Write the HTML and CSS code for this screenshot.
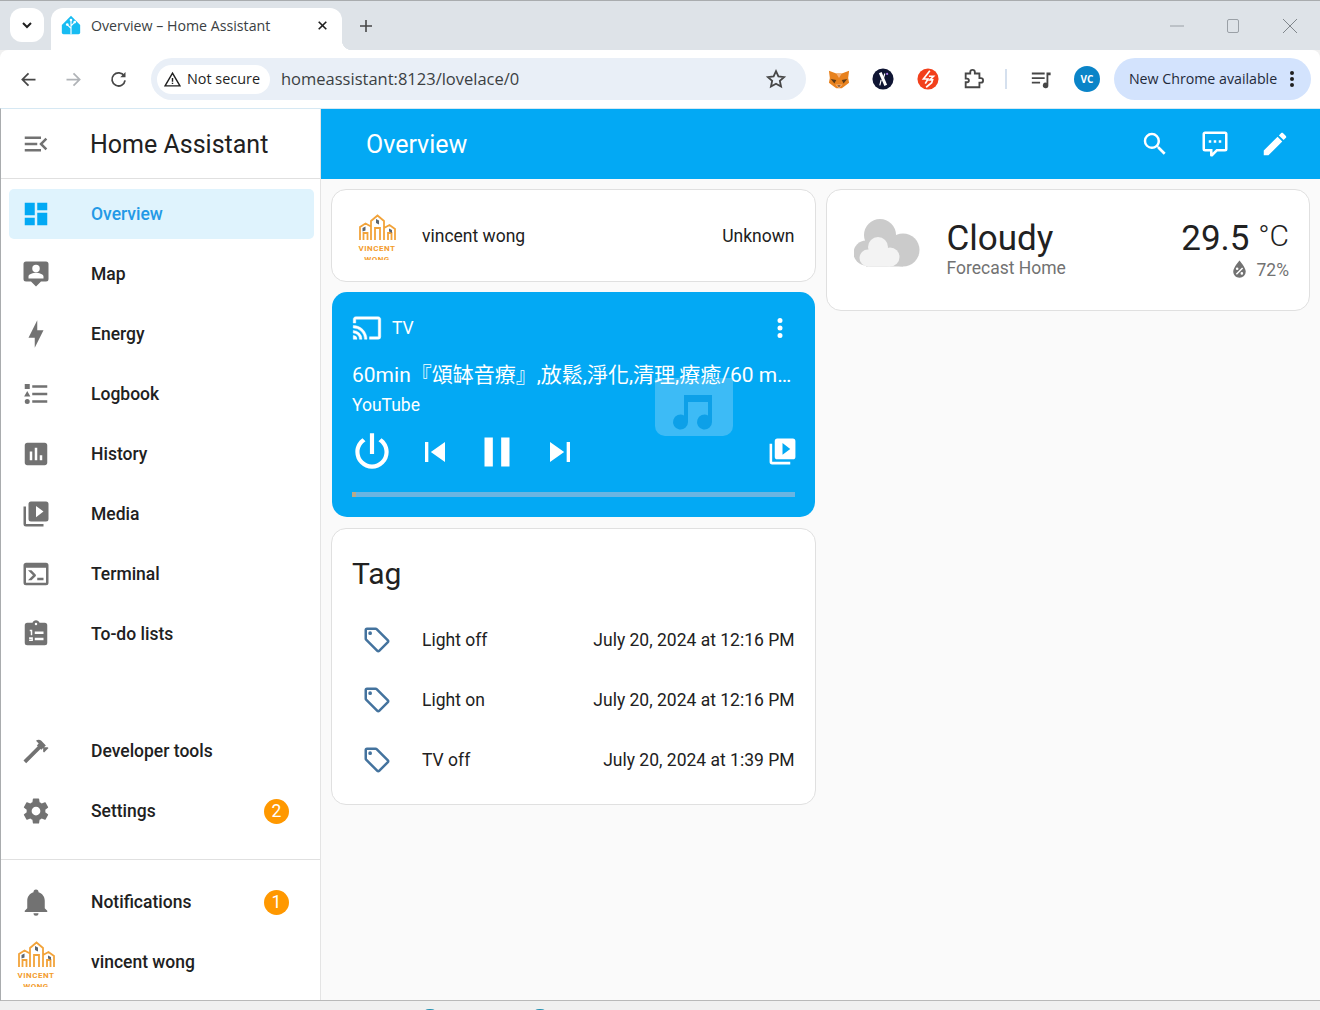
FILE: index.html
```html
<!DOCTYPE html>
<html lang="en">
  <head>
    <title>Overview – Home Assistant</title>
    <meta charset="UTF-8" />
    <meta name="viewport" content="width=device-width, initial-scale=1.0" />
    <link rel="stylesheet" href="styles.css">
  </head>
  <body>
    <div class="window">
      <!-- browser chrome -->
      <div class="tabstrip">
        <div class="tab-search">
          <svg class="ic18" viewBox="0 0 24 24"><path d="M6 9l6 6 6-6" fill="none" stroke="#1f1f1f" stroke-width="3"/></svg>
        </div>
        <div class="tab">
          <svg class="favicon" viewBox="0 0 24 24">
            <path d="M12 1L23 12V21a2 2 0 0 1-2 2H3a2 2 0 0 1-2-2V12Z" fill="#18bcf2"/>
            <path d="M12 23V6M12 16l-4.500-4.500M12 13l4.500-4.500" fill="none" stroke="#fff" stroke-width="1.400"/>
            <circle cx="12" cy="6" r="1.600" fill="#fff"/><circle cx="7.500" cy="11.500" r="1.600" fill="#fff"/><circle cx="16.500" cy="8.500" r="1.600" fill="#fff"/>
          </svg>
          <span class="tab-title">Overview – Home Assistant</span>
          <svg class="tab-close" viewBox="0 0 24 24"><path d="M5 5l14 14M19 5L5 19" fill="none" stroke="#1f1f1f" stroke-width="3"/></svg>
        </div>
        <svg class="new-tab" viewBox="0 0 24 24"><path d="M12 3v18M3 12h18" fill="none" stroke="#474747" stroke-width="2.400"/></svg>
        <div class="win-controls">
          <svg class="win-btn" viewBox="0 0 16 16"><path d="M2 8h14" stroke="#9aa0a6" stroke-width="1" fill="none"/></svg>
          <svg class="win-btn" viewBox="0 0 16 16"><rect x="2.500" y="1.500" width="11" height="13" rx="1.500" stroke="#9aa0a6" fill="none"/></svg>
          <svg class="win-btn" viewBox="0 0 16 16"><path d="M1 1l14 14M15 1L1 15" stroke="#80868b" stroke-width="1" fill="none"/></svg>
        </div>
      </div>

      <div class="toolbar">
        <svg class="nav-btn" viewBox="0 0 24 24"><path d="M20 12H5M12 5l-7 7 7 7" fill="none" stroke="#474747" stroke-width="2"/></svg>
        <svg class="nav-btn nav-gap" viewBox="0 0 24 24"><path d="M4 12h15M12 5l7 7-7 7" fill="none" stroke="#b0b3b7" stroke-width="2"/></svg>
        <svg class="nav-btn nav-gap" viewBox="0 0 24 24"><path d="M18.500 8A7.500 7.500 0 1 0 19.500 13" fill="none" stroke="#474747" stroke-width="2"/><path d="M20 3.500V9.500H14Z" fill="#474747"/></svg>
        <div class="omnibox">
          <div class="secure-pill">
            <svg class="warn" viewBox="0 0 24 24"><path d="M12 3L22.500 21H1.500Z" fill="none" stroke="#1f1f1f" stroke-width="2"/><path d="M12 10v5M12 16.500v2" stroke="#1f1f1f" stroke-width="2"/></svg>
            <span class="chrome-text">Not secure</span>
          </div>
          <span class="url chrome-text">homeassistant:8123/lovelace/0</span>
          <svg class="star" viewBox="0 0 24 24"><path d="M12 3.500l2.600 5.700 6.200.7-4.600 4.200 1.300 6.100L12 17.200l-5.500 3 1.300-6.100-4.600-4.200 6.200-.7Z" fill="none" stroke="#474747" stroke-width="2"/></svg>
        </div>
        <div class="extensions">
          <svg class="ext" viewBox="0 0 24 24">
            <path d="M1 3l8 3h6l8-3-1 8 1 5-5 4-3 2h-6l-3-2-5-4 1-5Z" fill="#e8821e"/>
            <path d="M3 12l6 1-2 4ZM21 12l-6 1 2 4Z" fill="#5c3a18"/>
            <path d="M9 6l3 5 3-5ZM8 18h8l-4 4Z" fill="#f6b27a"/>
            <path d="M10 19l2 1.500 2-1.500Z" fill="#2a1a0e"/>
          </svg>
          <svg class="ext" viewBox="0 0 24 24">
            <circle cx="12" cy="12" r="11.500" fill="#0f1533"/>
            <path d="M9 5l6 14" stroke="#fff" stroke-width="3.200" fill="none"/>
            <path d="M14 6l-1.500 5M10 13l-1.500 6" stroke="#fff" stroke-width="1.300" fill="none"/>
            <circle cx="16.500" cy="6.500" r="1.200" fill="#a77be8"/>
          </svg>
          <svg class="ext" viewBox="0 0 24 24">
            <circle cx="12" cy="12" r="11.500" fill="#f2401c"/>
            <path d="M14 3L7 12h5l-3 5M13 9h5l-4 4h3l-1 3-6 5" fill="none" stroke="#fff" stroke-width="1.800"/>
          </svg>
          <svg class="ext" viewBox="0 0 24 24"><path d="M4 6h5V4.500a2.500 2.500 0 0 1 5 0V6h5v5h1.500a2.500 2.500 0 0 1 0 5H19v5H4v-5.500h1.500a2 2 0 0 0 0-4H4Z" fill="none" stroke="#474747" stroke-width="2"/></svg>
          <div class="ext-sep"></div>
          <svg class="ext" viewBox="0 0 24 24"><path d="M2 5h14v2H2ZM2 10h14v2H2ZM2 15h9v2H2Z" fill="#474747"/><path d="M18 5h4.500v3H20v11a3 3 0 1 1-2-2.800Z" fill="#474747"/></svg>
          <div class="avatar-vc">VC</div>
        </div>
        <div class="update-pill">
          <span class="chrome-text">New Chrome available</span>
          <svg class="update-dots" viewBox="0 0 24 24"><path d="M12 16A2,2 0 0,1 14,18A2,2 0 0,1 12,20A2,2 0 0,1 10,18A2,2 0 0,1 12,16M12,10A2,2 0 0,1 14,12A2,2 0 0,1 12,14A2,2 0 0,1 10,12A2,2 0 0,1 12,10M12,4A2,2 0 0,1 14,6A2,2 0 0,1 12,8A2,2 0 0,1 10,6A2,2 0 0,1 12,4Z" fill="#1f1f1f"/></svg>
        </div>
      </div>

      <!-- home assistant -->
      <div class="app">
        <aside class="sidebar">
          <div class="side-head">
            <svg class="icon" viewBox="0 0 24 24"><path d="M21,15.61L19.59,17L14.58,12L19.59,7L21,8.39L17.44,12L21,15.61M3,6H16V8H3V6M3,13V11H13V13H3M3,18V16H16V18H3Z"/></svg>
            <span class="side-title">Home Assistant</span>
          </div>
          <nav class="side-nav">
            <div class="side-item selected">
              <svg class="icon" viewBox="0 0 24 24"><path d="M13,3V9H21V3M13,21H21V11H13M3,21H11V15H3M3,13H11V3H3V13Z"/></svg>
              <span>Overview</span>
            </div>
            <div class="side-item">
              <svg class="icon" viewBox="0 0 24 24"><path d="M20,2H4A2,2 0 0,0 2,4V16A2,2 0 0,0 4,18H8L12,22L16,18H20A2,2 0 0,0 22,16V4A2,2 0 0,0 20,2M12,4.500A3,3 0 0,1 15,7.500A3,3 0 0,1 12,10.500A3,3 0 0,1 9,7.500A3,3 0 0,1 12,4.500M18,15.500H6V14C6,12 10,11 12,11C14,11 18,12 18,14V15.500Z"/></svg>
              <span>Map</span>
            </div>
            <div class="side-item">
              <svg class="icon" viewBox="0 0 24 24"><path d="M11 15H6L13 1V9H18L11 23V15Z"/></svg>
              <span>Energy</span>
            </div>
            <div class="side-item">
              <svg class="icon" viewBox="0 0 24 24"><path d="M5,9.500L7.500,14H2.500L5,9.500M3,4H7V8H3V4M5,20A2,2 0 0,0 7,18A2,2 0 0,0 5,16A2,2 0 0,0 3,18A2,2 0 0,0 5,20M9,5V7H21V5H9M9,19H21V17H9V19M9,13H21V11H9V13Z"/></svg>
              <span>Logbook</span>
            </div>
            <div class="side-item">
              <svg class="icon" viewBox="0 0 24 24"><path d="M19 3H5C3.900 3 3 3.900 3 5V19C3 20.100 3.900 21 5 21H19C20.100 21 21 20.100 21 19V5C21 3.900 20.100 3 19 3M9 17H7V10H9V17M13 17H11V7H13V17M17 17H15V13H17V17Z"/></svg>
              <span>History</span>
            </div>
            <div class="side-item">
              <svg class="icon" viewBox="0 0 24 24"><path d="M4,6H2V20A2,2 0 0,0 4,22H18V20H4V6M20,2H8A2,2 0 0,0 6,4V16A2,2 0 0,0 8,18H20A2,2 0 0,0 22,16V4A2,2 0 0,0 20,2M12,14.500V5.500L18,10L12,14.500Z"/></svg>
              <span>Media</span>
            </div>
            <div class="side-item">
              <svg class="icon" viewBox="0 0 24 24"><path d="M20,19V7H4V19H20M20,3A2,2 0 0,1 22,5V19A2,2 0 0,1 20,21H4A2,2 0 0,1 2,19V5C2,3.890 2.900,3 4,3H20M13,17V15H18V17H13M9.580,13L5.570,9H8.400L11.700,12.300C12.090,12.690 12.090,13.330 11.700,13.720L8.420,17H5.590L9.580,13Z"/></svg>
              <span>Terminal</span>
            </div>
            <div class="side-item">
              <svg class="icon" viewBox="0 0 24 24"><path fill-rule="evenodd" d="M19,3H14.820C14.400,1.840 13.300,1 12,1C10.700,1 9.600,1.840 9.180,3H5A2,2 0 0,0 3,5V19A2,2 0 0,0 5,21H19A2,2 0 0,0 21,19V5A2,2 0 0,0 19,3M12,3A1,1 0 0,1 13,4A1,1 0 0,1 12,5A1,1 0 0,1 11,4A1,1 0 0,1 12,3M7,8.500H9V13H7.800V9.700H7ZM11,10H18V12H11ZM6.500,14.500H9.500V17.500H6.500V16.700H8.500V16.300H6.500ZM11,15H18V17H11Z"/></svg>
              <span>To-do lists</span>
            </div>
          </nav>
          <div class="side-spacer"></div>
          <div class="side-item">
            <svg class="icon" viewBox="0 0 24 24"><path d="M2 19.630L13.430 8.200L12.720 7.500L14.140 6.070L12 3.890C13.200 2.700 15.090 2.700 16.270 3.890L19.870 7.500L18.450 8.910H21.290L22 9.620L18.450 13.210L17.740 12.500V9.620L16.270 11.040L15.560 10.330L4.130 21.760L2 19.630Z"/></svg>
            <span>Developer tools</span>
          </div>
          <div class="side-item">
            <svg class="icon" viewBox="0 0 24 24"><path d="M12,15.500A3.500,3.500 0 0,1 8.500,12A3.500,3.500 0 0,1 12,8.500A3.500,3.500 0 0,1 15.500,12A3.500,3.500 0 0,1 12,15.500M19.430,12.970C19.470,12.650 19.500,12.330 19.500,12C19.500,11.670 19.470,11.340 19.430,11L21.540,9.370C21.730,9.220 21.780,8.950 21.660,8.730L19.660,5.270C19.540,5.050 19.270,4.960 19.050,5.050L16.560,6.050C16.040,5.660 15.500,5.320 14.870,5.070L14.500,2.420C14.460,2.180 14.250,2 14,2H10C9.750,2 9.540,2.180 9.500,2.420L9.130,5.070C8.500,5.320 7.960,5.660 7.440,6.050L4.950,5.050C4.730,4.960 4.460,5.050 4.340,5.270L2.340,8.730C2.210,8.950 2.270,9.220 2.460,9.370L4.570,11C4.530,11.340 4.500,11.670 4.500,12C4.500,12.330 4.530,12.650 4.570,12.970L2.460,14.630C2.270,14.780 2.210,15.050 2.340,15.270L4.340,18.730C4.460,18.950 4.730,19.030 4.950,18.950L7.440,17.940C7.960,18.340 8.500,18.680 9.130,18.930L9.500,21.580C9.540,21.820 9.750,22 10,22H14C14.250,22 14.460,21.820 14.500,21.580L14.870,18.930C15.500,18.670 16.040,18.340 16.560,17.940L19.050,18.950C19.270,19.030 19.540,18.950 19.660,18.730L21.660,15.270C21.780,15.050 21.730,14.780 21.540,14.630L19.430,12.970Z"/></svg>
            <span>Settings</span>
            <span class="badge">2</span>
          </div>
          <div class="side-divider"></div>
          <div class="side-item">
            <svg class="icon" viewBox="0 0 24 24"><path d="M21,19V20H3V19L5,17V11C5,7.900 7.030,5.170 10,4.290C10,4.190 10,4.100 10,4A2,2 0 0,1 12,2A2,2 0 0,1 14,4C14,4.100 14,4.190 14,4.290C16.970,5.170 19,7.900 19,11V17L21,19M14,21A2,2 0 0,1 12,23A2,2 0 0,1 10,21"/></svg>
            <span>Notifications</span>
            <span class="badge">1</span>
          </div>
          <div class="side-item side-user">
            <div class="logo">
              <svg class="logo-mark" viewBox="0 0 40 28">
                <path d="M3 26V13L8.500 9.500L14 12.500M6.500 26V19H10.500V26M14 26V7L20.500 1.500L27 7V26M18 26V14H23V26M27 14L32.500 11L38 15V26M31 26V19H34.500V26" fill="none" stroke="#f2a33a" stroke-width="1.800"/>
                <path d="M5.500 14l3-1.500v4l-3 1ZM19 5l3 1.500v4l-3-1.500ZM32 14.500l3 1.500v3l-3-1.500Z" fill="#5d6670"/>
              </svg>
              <span class="logo-line">VINCENT</span>
              <span class="logo-line">WONG</span>
            </div>
            <span>vincent wong</span>
          </div>
        </aside>

        <main class="main">
          <header class="main-head">
            <span class="main-title">Overview</span>
            <div class="head-actions">
              <svg class="icon-white" viewBox="0 0 24 24"><path d="M9.500,3A6.500,6.500 0 0,1 16,9.500C16,11.110 15.410,12.590 14.440,13.730L14.710,14H15.500L20.500,19L19,20.500L14,15.500V14.710L13.730,14.440C12.590,15.410 11.110,16 9.500,16A6.500,6.500 0 0,1 3,9.500A6.500,6.500 0 0,1 9.500,3M9.500,5C7,5 5,7 5,9.500C5,12 7,14 9.500,14C12,14 14,12 14,9.500C14,7 12,5 9.500,5Z"/></svg>
              <svg class="icon-white" viewBox="0 0 24 24"><path d="M9,22A1,1 0 0,1 8,21V18H4A2,2 0 0,1 2,16V4C2,2.890 2.900,2 4,2H20A2,2 0 0,1 22,4V16A2,2 0 0,1 20,18H13.900L10.200,21.710C10,21.900 9.750,22 9.500,22H9M10,16V19.080L13.080,16H20V4H4V16H10M17,11H15V9H17V11M13,11H11V9H13V11M9,11H7V9H9V11Z"/></svg>
              <svg class="icon-white" viewBox="0 0 24 24"><path d="M20.710,7.040C21.100,6.650 21.100,6 20.710,5.630L18.370,3.290C18,2.900 17.350,2.900 16.960,3.290L15.120,5.120L18.870,8.870M3,17.250V21H6.750L17.810,9.930L14.060,6.180L3,17.250Z"/></svg>
            </div>
          </header>

          <div class="cards">
            <div class="column">
              <div class="card person-card">
                <div class="logo">
                  <svg class="logo-mark" viewBox="0 0 40 28">
                    <path d="M3 26V13L8.500 9.500L14 12.500M6.500 26V19H10.500V26M14 26V7L20.500 1.500L27 7V26M18 26V14H23V26M27 14L32.500 11L38 15V26M31 26V19H34.500V26" fill="none" stroke="#f2a33a" stroke-width="1.800"/>
                    <path d="M5.500 14l3-1.500v4l-3 1ZM19 5l3 1.500v4l-3-1.500ZM32 14.500l3 1.500v3l-3-1.500Z" fill="#5d6670"/>
                  </svg>
                  <span class="logo-line">VINCENT</span>
                  <span class="logo-line">WONG</span>
                </div>
                <span class="row-name">vincent wong</span>
                <span class="row-value">Unknown</span>
              </div>

              <div class="media-card">
                <div class="media-art">
                  <svg class="media-note" viewBox="0 0 24 24"><path d="M7.500,4H21.500V17.500A3.750,3.750 0 1 1 19.500,14.200V7.500H9.500V17.500A3.750,3.750 0 1 1 7.500,14.200Z"/></svg>
                </div>
                <div class="media-top">
                  <svg class="icon-white icon-cast" viewBox="0 0 24 24"><path d="M1,10V12A9,9 0 0,1 10,21H12C12,14.920 7.070,10 1,10M1,14V16A5,5 0 0,1 6,21H8A7,7 0 0,0 1,14M1,18V21H4A3,3 0 0,0 1,18M21,3H3C1.890,3 1,3.890 1,5V8H3V5H21V19H14V21H21A2,2 0 0,0 23,19V5C23,3.890 22.100,3 21,3Z"/></svg>
                  <span class="media-device">TV</span>
                  <svg class="icon-white media-more" viewBox="0 0 24 24"><path d="M12,16A2,2 0 0,1 14,18A2,2 0 0,1 12,20A2,2 0 0,1 10,18A2,2 0 0,1 12,16M12,10A2,2 0 0,1 14,12A2,2 0 0,1 12,14A2,2 0 0,1 10,12A2,2 0 0,1 12,10M12,4A2,2 0 0,1 14,6A2,2 0 0,1 12,8A2,2 0 0,1 10,6A2,2 0 0,1 12,4Z"/></svg>
                </div>
                <div class="media-title">60min『頌缽音療』,放鬆,淨化,清理,療癒/60 minutes of singing bowl</div>
                <div class="media-app">YouTube</div>
                <div class="media-controls">
                  <svg class="ctrl-large ctrl-power" viewBox="0 0 24 24"><path d="M16.560,5.440L15.110,6.890C16.840,7.940 18,9.830 18,12A6,6 0 0,1 12,18A6,6 0 0,1 6,12C6,9.830 7.160,7.940 8.880,6.880L7.440,5.440C5.360,6.880 4,9.280 4,12A8,8 0 0,0 12,20A8,8 0 0,0 20,12C20,9.280 18.640,6.880 16.560,5.440M13,3H11V13H13"/></svg>
                  <svg class="ctrl-small" viewBox="0 0 24 24"><path d="M6,18V6H8V18H6M9.500,12L18,6V18L9.500,12Z"/></svg>
                  <svg class="ctrl-large" viewBox="0 0 24 24"><path d="M14,19H18V5H14M6,19H10V5H6V19Z"/></svg>
                  <svg class="ctrl-small" viewBox="0 0 24 24"><path d="M16,18H18V6H16M6,18L14.500,12L6,6V18Z"/></svg>
                  <svg class="ctrl-browse" viewBox="0 0 24 24"><path d="M4,6H2V20A2,2 0 0,0 4,22H18V20H4V6M20,2H8A2,2 0 0,0 6,4V16A2,2 0 0,0 8,18H20A2,2 0 0,0 22,16V4A2,2 0 0,0 20,2M12,14.500V5.500L18,10L12,14.500Z"/></svg>
                </div>
                <div class="media-progress"><div class="media-progress-done"></div></div>
              </div>

              <div class="card tag-card">
                <div class="tag-title">Tag</div>
                <div class="tag-row">
                  <svg class="tag-icon" viewBox="0 0 24 24"><path d="M21.410 11.580L12.410 2.580A2 2 0 0 0 11 2H4A2 2 0 0 0 2 4V11A2 2 0 0 0 2.590 12.420L11.590 21.420A2 2 0 0 0 13 22A2 2 0 0 0 14.410 21.410L21.410 14.410A2 2 0 0 0 22 13A2 2 0 0 0 21.410 11.580M13 20L4 11V4H11L20 13M6.500 5A1.500 1.500 0 1 1 5 6.500A1.500 1.500 0 0 1 6.500 5Z"/></svg>
                  <span class="row-name">Light off</span>
                  <span class="row-value">July 20, 2024 at 12:16 PM</span>
                </div>
                <div class="tag-row">
                  <svg class="tag-icon" viewBox="0 0 24 24"><path d="M21.410 11.580L12.410 2.580A2 2 0 0 0 11 2H4A2 2 0 0 0 2 4V11A2 2 0 0 0 2.590 12.420L11.590 21.420A2 2 0 0 0 13 22A2 2 0 0 0 14.410 21.410L21.410 14.410A2 2 0 0 0 22 13A2 2 0 0 0 21.410 11.580M13 20L4 11V4H11L20 13M6.500 5A1.500 1.500 0 1 1 5 6.500A1.500 1.500 0 0 1 6.500 5Z"/></svg>
                  <span class="row-name">Light on</span>
                  <span class="row-value">July 20, 2024 at 12:16 PM</span>
                </div>
                <div class="tag-row">
                  <svg class="tag-icon" viewBox="0 0 24 24"><path d="M21.410 11.580L12.410 2.580A2 2 0 0 0 11 2H4A2 2 0 0 0 2 4V11A2 2 0 0 0 2.590 12.420L11.590 21.420A2 2 0 0 0 13 22A2 2 0 0 0 14.410 21.410L21.410 14.410A2 2 0 0 0 22 13A2 2 0 0 0 21.410 11.580M13 20L4 11V4H11L20 13M6.500 5A1.500 1.500 0 1 1 5 6.500A1.500 1.500 0 0 1 6.500 5Z"/></svg>
                  <span class="row-name">TV off</span>
                  <span class="row-value">July 20, 2024 at 1:39 PM</span>
                </div>
              </div>
            </div>

            <div class="column">
              <div class="card weather-card">
                <svg class="weather-icon" viewBox="0 0 66 48">
                  <g fill="#cbcbcb"><circle cx="26" cy="16" r="16"/><circle cx="49" cy="31" r="16.500"/><circle cx="12" cy="34" r="12.500"/><rect x="12" y="28" width="37" height="19.500"/></g>
                  <g fill="#f3f3f3"><circle cx="24" cy="28" r="10"/><circle cx="14" cy="39" r="8.500"/><circle cx="36" cy="38" r="9.500"/><rect x="14" y="36" width="22" height="11.500"/></g>
                </svg>
                <div class="weather-text">
                  <div class="weather-state">Cloudy</div>
                  <div class="weather-name">Forecast Home</div>
                </div>
                <div class="weather-info">
                  <div class="weather-temp">29.5 <span class="weather-unit">°C</span></div>
                  <div class="weather-humidity">
                    <svg class="humidity-icon" viewBox="0 0 24 24"><path d="M12,3.250C12,3.250 6,10 6,14C6,17.320 8.690,20 12,20A6,6 0 0,0 18,14C18,10 12,3.250 12,3.250M14.470,9.970L15.530,11.030L9.530,17.030L8.470,15.970M9.750,10A1.250,1.250 0 0,1 11,11.250A1.250,1.250 0 0,1 9.750,12.500A1.250,1.250 0 0,1 8.500,11.250A1.250,1.250 0 0,1 9.750,10M14.250,14.500A1.250,1.250 0 0,1 15.500,15.750A1.250,1.250 0 0,1 14.250,17A1.250,1.250 0 0,1 13,15.750A1.250,1.250 0 0,1 14.250,14.500Z"/></svg>
                    <span>72%</span>
                  </div>
                </div>
              </div>
            </div>
          </div>
        </main>
      </div>

      <div class="taskbar">
        <span class="taskbar-dot dot-one"></span>
        <span class="taskbar-dot dot-two"></span>
      </div>
    </div>
  </body>
</html>
```

FILE: styles.css
```css
html,
body {
  margin: 0;
  width: 1320px;
  height: 1010px;
  overflow: hidden;
  font-family: Roboto, "Noto Sans CJK TC", sans-serif;
  color: #212121;
}

.window {
  width: 1320px;
  height: 1010px;
  display: flex;
  flex-direction: column;
  overflow: hidden;
  background-color: #f0f0f0;
}

/* browser chrome */
.tabstrip {
  height: 49px;
  flex: none;
  display: flex;
  align-items: flex-start;
  border-top: 1px solid #a9acae;
  background-color: #dee3e8;
  font-family: "Open Sans", sans-serif;
}

.tab-search {
  width: 34px;
  height: 34px;
  margin: 7px 0 0 10px;
  display: flex;
  align-items: center;
  justify-content: center;
  border-radius: 12px;
  background-color: #fff;
}

.ic18 {
  width: 16px;
  height: 16px;
}

.tab {
  position: relative;
  width: 291px;
  height: 42px;
  margin: 7px 0 0 7px;
  box-sizing: border-box;
  padding: 0 13px 8px 10px;
  display: flex;
  align-items: center;
  border-radius: 12px 12px 0 0;
  background-color: #fff;
}

.tab::after {
  content: "";
  position: absolute;
  right: -10px;
  bottom: 0;
  width: 10px;
  height: 10px;
  background: radial-gradient(circle at 100% 0, transparent 10px, #fff 10.500px);
}

.favicon {
  width: 20px;
  height: 20px;
  flex: none;
}

.tab-title {
  margin-left: 10px;
  font-size: 14.200px;
  white-space: nowrap;
  color: #3b3f43;
}

.tab-close {
  width: 13px;
  height: 13px;
  margin-left: auto;
}

.new-tab {
  width: 16px;
  height: 16px;
  margin: 17px 0 0 16px;
}

.win-controls {
  margin-left: auto;
  margin-top: 17px;
  padding-right: 22px;
  display: flex;
  gap: 41px;
}

.win-btn {
  width: 16px;
  height: 16px;
}

.toolbar {
  height: 58px;
  flex: none;
  display: flex;
  align-items: center;
  padding-left: 18px;
  border-radius: 8px 8px 0 0;
  background-color: #fff;
  font-family: "Open Sans", sans-serif;
}

.chrome-text {
  padding-bottom: 2px;
}

.nav-btn {
  width: 21px;
  height: 21px;
  flex: none;
}

.nav-gap {
  margin-left: 24px;
}

.omnibox {
  width: 655px;
  height: 42px;
  flex: none;
  margin-left: 22px;
  box-sizing: border-box;
  padding: 0 19px 0 6px;
  display: flex;
  align-items: center;
  border-radius: 21px;
  background-color: #e9eff7;
}

.secure-pill {
  height: 29px;
  width: 113px;
  box-sizing: border-box;
  padding-left: 7px;
  display: flex;
  align-items: center;
  gap: 6px;
  border-radius: 15px;
  background-color: #fff;
  font-size: 14.400px;
  color: #1f1f1f;
}

.warn {
  width: 17px;
  height: 17px;
}

.url {
  margin-left: 11px;
  font-size: 16.500px;
  color: #3b3f43;
}

.star {
  width: 22px;
  height: 22px;
  margin-left: auto;
}

.extensions {
  display: flex;
  align-items: center;
  margin-left: 21.500px;
}

.ext {
  width: 22px;
  height: 22px;
  margin-right: 22.700px;
  flex: none;
}

.ext-sep {
  width: 2px;
  height: 20px;
  margin: 0 23px 0 -1px;
  background-color: #d5e0ee;
}

.avatar-vc {
  width: 26px;
  height: 26px;
  margin-left: -1px;
  display: flex;
  align-items: center;
  justify-content: center;
  border-radius: 50%;
  background-color: #0a84c8;
  color: #fff;
  font-size: 10px;
  font-weight: 700;
}

.update-pill {
  width: 197px;
  height: 42px;
  margin-left: 14px;
  box-sizing: border-box;
  padding: 0 7px 0 15px;
  display: flex;
  align-items: center;
  justify-content: space-between;
  border-radius: 21px;
  background-color: #d3e3fd;
  font-size: 14.200px;
  white-space: nowrap;
  color: #1f2a3a;
}

.update-dots {
  width: 24px;
  height: 24px;
}

/* app */
.app {
  height: 893px;
  flex: none;
  display: flex;
  border-left: 1px solid #a9acae;
  border-top: 1px solid #d6e8f3;
  border-bottom: 1px solid #b9b9b9;
  box-sizing: border-box;
  background-color: #fff;
}

.sidebar {
  width: 320px;
  flex: none;
  display: flex;
  flex-direction: column;
  box-sizing: border-box;
  border-right: 1px solid #e4e4e4;
  padding-bottom: 13px;
}

.icon {
  width: 30px;
  height: 30px;
  flex: none;
  fill: #727272;
}

.side-head {
  height: 70px;
  flex: none;
  box-sizing: border-box;
  padding: 1px 0 0 20px;
  display: flex;
  align-items: center;
  border-bottom: 1px solid #e0e0e0;
}

.side-title {
  margin-left: 39px;
  font-size: 25px;
  white-space: nowrap;
}

.side-nav {
  padding-top: 10px;
}

.side-item {
  width: 305px;
  height: 50px;
  margin: 0 0 10px 8px;
  box-sizing: border-box;
  padding: 0 25px 0 12px;
  display: flex;
  align-items: center;
  border-radius: 5px;
  font-size: 17.500px;
  font-weight: 500;
}

.side-item > span:first-of-type {
  margin-left: 40px;
}

.side-item.selected {
  background-color: #dff3fd;
  color: #2399e6;
}

.selected .icon {
  fill: #03a9f4;
}

.side-spacer {
  flex: 1;
}

.side-divider {
  height: 1px;
  margin: 13px 0 17px;
  background-color: #e0e0e0;
}

.badge {
  width: 25px;
  height: 25px;
  margin-left: auto;
  display: flex;
  align-items: center;
  justify-content: center;
  border-radius: 50%;
  background-color: #ff9800;
  color: #fff;
  font-size: 17.500px;
  font-weight: 400;
}

.side-user {
  margin-bottom: 0;
}

.side-user .logo {
  margin: 4px 0 0 -5px;
}

.side-user > span:first-of-type {
  margin-left: 35px;
}

.logo {
  width: 40px;
  height: 46px;
  flex: none;
  display: flex;
  flex-direction: column;
  align-items: center;
  overflow: hidden;
}

.logo-mark {
  width: 40px;
  height: 28px;
  flex: none;
  margin-bottom: 3px;
}

.logo-line {
  height: 8px;
  line-height: 8px;
  flex: none;
  font-size: 8px;
  font-weight: 700;
  letter-spacing: 0.500px;
  color: #f39c2c;
}

.logo-line + .logo-line {
  margin-top: 3px;
}

.main {
  flex: 1;
  min-width: 0;
  background-color: #fafafa;
}

.main-head {
  height: 70px;
  box-sizing: border-box;
  padding: 0 30px 0 45px;
  display: flex;
  align-items: center;
  justify-content: space-between;
  background-color: #03a9f4;
  color: #fff;
}

.main-title {
  font-size: 25px;
}

.head-actions {
  display: flex;
  gap: 30px;
}

.icon-white {
  width: 30px;
  height: 30px;
  flex: none;
  fill: #fff;
}

.icon-cast {
  stroke: #fff;
  stroke-width: 0.350;
}

.cards {
  padding: 10px;
  display: grid;
  grid-template-columns: 1fr 1fr;
  gap: 10px;
}

.column {
  display: flex;
  flex-direction: column;
  gap: 10px;
  min-width: 0;
}

.card {
  box-sizing: border-box;
  border: 1px solid #e0e0e0;
  border-radius: 15px;
  background-color: #fff;
}

.person-card {
  height: 92.500px;
  padding: 1px 20px 0 25px;
  display: flex;
  align-items: center;
}

.person-card .logo {
  margin-top: 2px;
}

.row-name {
  margin-left: 25px;
  font-size: 17.500px;
}

.tag-row .row-name {
  margin-left: 30px;
}

.row-value {
  margin-left: auto;
  font-size: 17.500px;
}

/* media player */
.media-card {
  position: relative;
  height: 225px;
  margin: 0 1px;
  box-sizing: border-box;
  padding: 21px 20px 0;
  border-radius: 15px;
  background-color: #03a9f4;
  color: #fff;
}

.media-art {
  position: absolute;
  left: 323px;
  top: 86px;
  width: 78px;
  height: 58px;
  display: flex;
  align-items: flex-end;
  justify-content: center;
  border-radius: 0 0 10px 10px;
  background-color: #3dbbf6;
}

.media-note {
  width: 48px;
  height: 48px;
  margin: 0 2px 1px 0;
  fill: #0da0e8;
}

.media-top {
  position: relative;
  height: 30px;
  display: flex;
  align-items: center;
}

.media-device {
  margin-left: 10px;
  font-size: 17.500px;
}

.media-more {
  margin-left: auto;
}

.media-title {
  position: relative;
  height: 30px;
  margin-top: 17px;
  line-height: 30px;
  font-size: 21px;
  white-space: nowrap;
  overflow: hidden;
  text-overflow: ellipsis;
}

.media-app {
  position: relative;
  height: 25px;
  margin-top: 3px;
  line-height: 25px;
  font-size: 17.500px;
}

.media-controls {
  position: relative;
  height: 50px;
  margin-top: 9px;
  display: flex;
  align-items: center;
  fill: #fff;
}

.ctrl-large {
  width: 50px;
  height: 50px;
  flex: none;
  margin-right: 18px;
}

.ctrl-power {
  margin-left: -5px;
}

.ctrl-small {
  width: 40px;
  height: 40px;
  flex: none;
  margin-right: 17px;
}

.ctrl-browse {
  width: 31px;
  height: 31px;
  margin: 0 -3px 0 auto;
}

.media-progress {
  position: relative;
  height: 5px;
  margin-top: 15px;
  background-color: #6ab5e2;
}

.media-progress-done {
  width: 4px;
  height: 5px;
  background-color: #b8a98a;
}

/* tag list */
.tag-card {
  height: 277px;
  margin-top: 1px;
  padding: 0 20px;
}

.tag-title {
  height: 30px;
  margin-top: 30px;
  margin-bottom: 21px;
  line-height: 30px;
  font-size: 30px;
}

.tag-row {
  height: 60px;
  padding-left: 10px;
  display: flex;
  align-items: center;
}

.tag-icon {
  width: 30px;
  height: 30px;
  flex: none;
  fill: #44739e;
}

/* weather */
.weather-card {
  height: 122px;
  padding: 0 20px 0 27px;
  display: flex;
  align-items: center;
}

.weather-icon {
  width: 66px;
  height: 48px;
  flex: none;
  margin-bottom: 14px;
}

.weather-text {
  margin-left: 27px;
  margin-bottom: 3px;
}

.weather-state {
  height: 40px;
  line-height: 40px;
  font-size: 35px;
}

.weather-name {
  height: 22px;
  margin-top: -2px;
  line-height: 22px;
  font-size: 17.500px;
  color: #727272;
}

.weather-info {
  margin-left: auto;
  text-align: right;
}

.weather-temp {
  height: 40px;
  line-height: 40px;
  font-size: 35px;
  white-space: nowrap;
}

.weather-unit {
  font-size: 30px;
  font-weight: 300;
  line-height: 0;
  vertical-align: 4px;
}

.weather-humidity {
  height: 24px;
  margin-top: -1px;
  display: flex;
  align-items: center;
  justify-content: flex-end;
  gap: 5px;
  font-size: 17.500px;
  color: #727272;
}

.humidity-icon {
  width: 25px;
  height: 25px;
  fill: #727272;
}

.taskbar {
  flex: 1;
  position: relative;
}

.taskbar-dot {
  position: absolute;
  top: 8px;
  width: 10px;
  height: 4px;
  border-radius: 50%;
  background-color: #1f8fb0;
}

.dot-one {
  left: 425px;
}

.dot-two {
  left: 535px;
}
```
